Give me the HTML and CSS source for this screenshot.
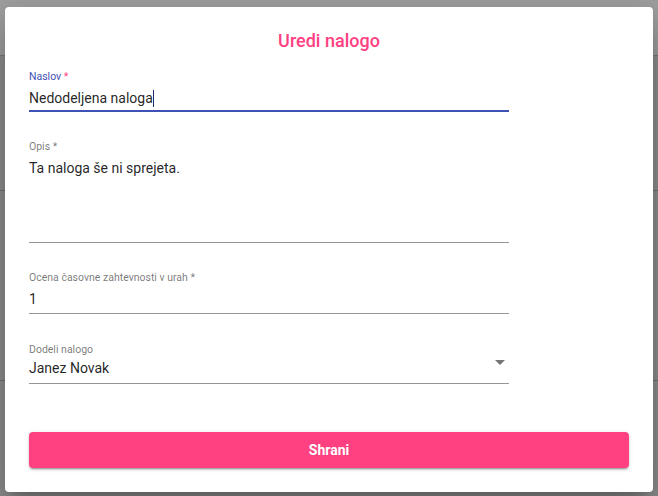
FILE: index.html
```html
<!DOCTYPE html>
<html lang="sl">
<head>
<meta charset="utf-8">
<title>Uredi nalogo</title>
<link rel="stylesheet" href="styles.css">
</head>
<body>
<div class="page">
  <div class="page-header"></div>
  <div class="page-row row-a"></div>
  <div class="page-row row-b"></div>
</div>
<div class="dialog">
  <h2 class="dialog-title">Uredi nalogo</h2>
  <div class="form">
    <div class="field field-focused">
      <label class="field-label">Naslov <span class="req">*</span></label>
      <div class="control"><span class="value">Nedodeljena naloga</span><span class="caret"></span></div>
    </div>
    <div class="field">
      <label class="field-label">Opis *</label>
      <div class="control control-multi"><span class="value">Ta naloga še ni sprejeta.</span></div>
    </div>
    <div class="field field-num">
      <label class="field-label">Ocena časovne zahtevnosti v urah *</label>
      <div class="control"><span class="value">1</span></div>
    </div>
    <div class="field field-select">
      <label class="field-label">Dodeli nalogo</label>
      <div class="control"><span class="value">Janez Novak</span><span class="arrow"></span></div>
    </div>
  </div>
  <div class="actions">
    <button class="btn-save" type="button">Shrani</button>
  </div>
</div>
</body>
</html>
```
FILE: styles.css
```css
html, body {
  margin: 0;
  padding: 0;
}
body {
  width: 658px;
  height: 496px;
  overflow: hidden;
  background: #8f8f8f;
  font-family: Roboto, "Noto Sans", sans-serif;
  position: relative;
}
.page-header {
  height: 56px;
  background: #a0a0a0;
  border-bottom: 1px solid #7a7a7a;
  box-sizing: border-box;
}
.page-row {
  border-bottom: 1px solid #757575;
  box-sizing: border-box;
}
.row-a { height: 135px; }
.row-b { height: 190px; }

.dialog {
  position: absolute;
  left: 5px;
  top: 7px;
  width: 648px;
  height: 485px;
  box-sizing: border-box;
  padding: 22px 24px 24px;
  background: #fff;
  border-radius: 4px;
  box-shadow: 0 11px 15px -7px rgba(0,0,0,.2), 0 24px 38px 3px rgba(0,0,0,.14), 0 9px 46px 8px rgba(0,0,0,.12);
  display: flex;
  flex-direction: column;
}
.dialog-title {
  margin: 0 0 18px;
  font-size: 18px;
  font-weight: 500;
  line-height: 24px;
  color: #ff4081;
  text-align: center;
}
.form {
  width: 480px;
  display: flex;
  flex-direction: column;
}
.field {
  display: flex;
  flex-direction: column;
  margin-bottom: 29px;
}
.field-label {
  font-size: 10.5px;
  line-height: 12px;
  color: rgba(0,0,0,.54);
  margin-bottom: 6px;
}
.field-focused .field-label {
  color: #3f51b5;
}
.req {
  color: #ff4081;
}
.control {
  display: flex;
  align-items: flex-start;
  font-size: 14px;
  line-height: 18px;
  color: rgba(0,0,0,.87);
  padding-bottom: 3px;
  border-bottom: 1px solid rgba(0,0,0,.42);
}
.field-focused .control {
  border-bottom: 2px solid #3f51b5;
}
.caret {
  width: 1px;
  height: 17px;
  background: #1f2a6b;
  margin-top: 1px;
}
.control-multi {
  height: 80px;
}
.field-num {
  margin-bottom: 30px;
}
.field-num .control {
  padding-bottom: 5px;
}
.field-select {
  margin-bottom: 0;
}
.field-select .field-label {
  margin-bottom: 3px;
}
.field-select .control {
  padding-bottom: 6px;
}
.field-select .value {
  flex: 1;
}
.arrow {
  width: 0;
  height: 0;
  border-left: 5px solid transparent;
  border-right: 5px solid transparent;
  border-top: 5px solid #757575;
  margin: 1px 4px 0 0;
}
.actions {
  margin-top: auto;
  display: flex;
}
.btn-save {
  flex: 1;
  height: 36px;
  border: 0;
  border-radius: 4px;
  background: #ff4081;
  color: #fff;
  font-family: Roboto, "Noto Sans", sans-serif;
  font-size: 14px;
  font-weight: 700;
  box-shadow: 0 3px 1px -2px rgba(0,0,0,.2), 0 2px 2px 0 rgba(0,0,0,.14), 0 1px 5px 0 rgba(0,0,0,.12);
}
```
